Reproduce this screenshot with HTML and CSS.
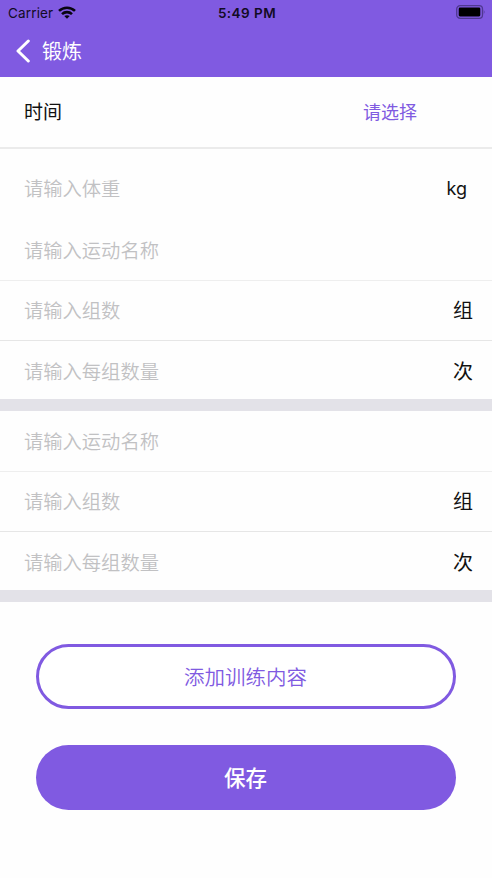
FILE: index.html
```html
<!DOCTYPE html>
<html lang="zh-CN">
<head>
<meta charset="utf-8">
<title>锻炼</title>
<link rel="stylesheet" href="styles.css">
</head>
<body>
<header class="header">
  <div class="status">
    <div class="status-left">
      <span class="carrier">Carrier</span>
      <svg class="wifi" width="18" height="13" viewBox="0 0 18 13" fill="none" stroke="#080510" stroke-width="2.6">
        <path d="M1 4.9C5.5 .65 12.5 .65 17 4.9"/>
        <path d="M4 8.1C6.8 5.5 11.2 5.5 14 8.1"/>
        <path d="M9 12.8L6.3 10.1C7.8 8.8 10.2 8.8 11.7 10.1Z" fill="#080510" stroke="none"/>
      </svg>
    </div>
    <span class="clock">5:49 PM</span>
    <div class="status-right">
      <svg class="battery" width="30" height="14" viewBox="0 0 30 14">
        <rect x=".7" y=".7" width="25.8" height="12.6" rx="3.4" fill="none" stroke="#4f3891" stroke-width="1.3"/>
        <rect x="2.7" y="2.6" width="21.6" height="8.8" rx="1.3" fill="#000"/>
        <path d="M27.8 4.8Q29.4 7 27.8 9.2Z" fill="#4f3891"/>
      </svg>
    </div>
  </div>
  <nav class="nav">
    <svg width="15" height="24" viewBox="0 0 15 24" fill="none" stroke="#fff" stroke-width="3" stroke-linecap="round" stroke-linejoin="round"><path d="M13.3 2L3 12L13.3 22"/></svg>
    <h1 class="title">锻炼</h1>
  </nav>
</header>
<main>
  <div class="row row-time"><span class="label">时间</span><span class="choose">请选择</span></div>
  <div class="row row-weight"><span class="hint">请输入体重</span><span class="unit unit-kg">kg</span></div>
  <section class="group">
    <div class="row row-name"><span class="hint">请输入运动名称</span></div>
    <div class="row row-sets"><span class="hint">请输入组数</span><span class="unit">组</span></div>
    <div class="row row-reps"><span class="hint">请输入每组数量</span><span class="unit">次</span></div>
  </section>
  <section class="group">
    <div class="row row-name"><span class="hint">请输入运动名称</span></div>
    <div class="row row-sets"><span class="hint">请输入组数</span><span class="unit">组</span></div>
    <div class="row row-reps"><span class="hint">请输入每组数量</span><span class="unit">次</span></div>
  </section>
  <div class="actions">
    <button class="button button-add">添加训练内容</button>
    <button class="button button-save">保存</button>
  </div>
</main>
</body>
</html>
```
FILE: styles.css
```css
* { box-sizing: border-box; }

body {
  margin: 0;
  min-height: 878px;
  background: #fefefe;
  color: #111;
  font-family: "Noto Sans CJK SC", sans-serif;
}

.header { height: 77px; background: #805ae1; }

.status {
  display: grid;
  grid-template-columns: 1fr auto 1fr;
  align-items: center;
  height: 26px;
  padding: 0 6px 0 8px;
  font-family: Inter, sans-serif;
  font-size: 13.5px;
  line-height: 26px;
  color: #120b24;
}
.status-left { display: flex; align-items: center; gap: 5px; }
.carrier { letter-spacing: 0.15px; }
.wifi { display: block; margin-top: -2px; }
.clock { font-weight: 600; letter-spacing: 0.45px; }
.status-right { display: flex; justify-content: flex-end; }
.battery { display: block; margin-top: -2px; }

.nav {
  display: flex;
  align-items: center;
  gap: 11px;
  height: 49px;
  padding-left: 15px;
  color: #fff;
}
.title { margin: 0; padding-left: 1px; font-size: 20px; font-weight: 400; line-height: 30px; }

.row {
  display: flex;
  align-items: center;
  justify-content: space-between;
  padding: 0 18px 2px 24px;
  line-height: 30px;
}
.row-time { height: 72px; padding-right: 75px; border-bottom: 2px solid #ebebeb; }
.row-weight { height: 71px; padding: 6px 25px 0 24px; }
.row-name { height: 61px; padding-bottom: 0; border-bottom: 1px solid #eee; }
.row-sets { height: 60px; border-bottom: 1px solid #e6e6e6; }
.row-reps { height: 58px; padding-top: 2px; padding-bottom: 0; }

.label { font-size: 19px; }
.choose { font-size: 18px; color: #805ae1; }
.hint { font-size: 19.3px; font-weight: 350; color: #c1c1c3; }
.unit { padding-right: 1px; font-size: 20px; }
.unit-kg { padding: 2px 0 0; font-family: Inter, sans-serif; font-size: 18px; }

.group { border-bottom: 12px solid #e3e2e8; }

.actions {
  display: flex;
  flex-direction: column;
  gap: 36px;
  padding: 42px 36px 0;
}
.button {
  height: 65px;
  padding: 0 1px 2px 0;
  border: 0;
  border-radius: 33px;
  font-family: inherit;
  line-height: 30px;
}
.button-add { border: 3px solid #805ae1; background: #fff; color: #805ae1; font-size: 20.5px; font-weight: 350; }
.button-save { background: #805ae1; color: #fff; font-size: 21.5px; font-weight: 500; }
```
